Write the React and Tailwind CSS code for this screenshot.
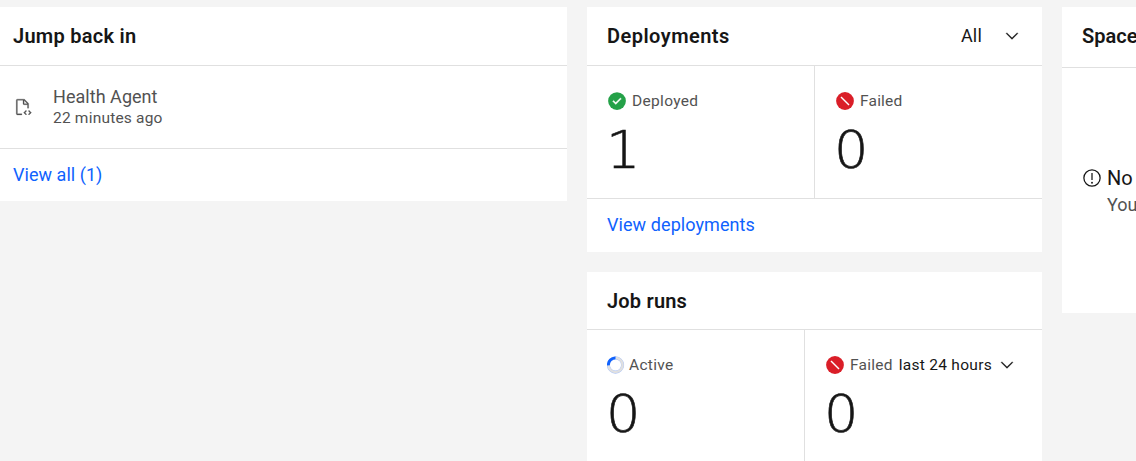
import React from "react";

function Chevron() {
  return (
    <svg className="h-[18px] w-[18px] shrink-0" viewBox="0 0 16 16" fill="#161616" stroke="#161616" strokeWidth="0.2">
      <path d="M8 11 2.7 5.7 3.4 5 8 9.6 12.6 5 13.3 5.7z" />
    </svg>
  );
}

function DocumentIcon() {
  return (
    <svg className="h-[18px] w-[18px] shrink-0" viewBox="0 0 32 32" fill="#525252" stroke="#525252" strokeWidth="0.5">
      <path d="M31 26l-4.24 4.24-1.41-1.41L28.17 26l-2.82-2.83 1.41-1.41zM17 26l4.24-4.24 1.41 1.41L19.83 26l2.82 2.83-1.41 1.41z" />
      <path d="M14 28H6V4h10v6a2 2 0 0 0 2 2h6v6h2v-8a.9.9 0 0 0-.3-.7l-7-7A.9.9 0 0 0 18 2H6a2 2 0 0 0-2 2v24a2 2 0 0 0 2 2h8zM18 4.4l5.6 5.6H18z" />
    </svg>
  );
}

function SuccessIcon() {
  return (
    <svg className="h-5 w-5 shrink-0" viewBox="0 0 32 32">
      <circle cx="16" cy="16" r="14.2" fill="#24a148" />
      <path d="M14 21.59l-5-5L10.59 15 14 18.41 21.41 11 23 12.58z" fill="#fff" stroke="#fff" strokeWidth="0.5" />
    </svg>
  );
}

function FailedIcon() {
  return (
    <svg className="h-5 w-5 shrink-0" viewBox="0 0 20 20">
      <circle cx="10" cy="10" r="8.9" fill="#da1e28" />
      <path d="M6 6l8 8" stroke="#fff" strokeWidth="1.5" />
    </svg>
  );
}

function ActiveIcon() {
  return (
    <svg className="h-[18px] w-[18px] shrink-0" viewBox="0 0 18 18" fill="none">
      <circle cx="8.5" cy="9" r="7.1" stroke="#a9c2f8" strokeWidth="3.1" />
      <circle cx="8.5" cy="9" r="7.1" stroke="#e0e0e0" strokeWidth="2.4" />
      <path d="M1.4 9.4a7.1 7.1 0 0 1 7.1-7.5" stroke="#0f62fe" strokeWidth="2.9" />
    </svg>
  );
}

function WarningIcon() {
  return (
    <svg className="mt-[2px] h-5 w-5 shrink-0" viewBox="0 0 32 32" fill="#161616">
      <path d="M16 2a14 14 0 1 0 14 14A14 14 0 0 0 16 2zm0 26a12 12 0 1 1 12-12 12 12 0 0 1-12 12z" />
      <path d="M15 8h2v11h-2zM16 22a1.5 1.5 0 1 0 1.5 1.5A1.5 1.5 0 0 0 16 22z" />
    </svg>
  );
}

function Heading({ children, className }) {
  return <h2 className={"whitespace-nowrap text-[20px] leading-6 font-semibold " + className}>{children}</h2>;
}

function BigNumber({ children }) {
  return (
    <div className="mt-[10px] -ml-[1px] w-[34px] origin-left scale-x-[1.06] font-['DejaVu_Sans',sans-serif] text-[51px] leading-[60px] font-extralight [-webkit-text-stroke:0.6px_#161616]">
      {children}
    </div>
  );
}

function Label({ children, className }) {
  return <span className={"whitespace-nowrap text-[15.5px] leading-5 text-[#525252] " + className}>{children}</span>;
}

export default function App() {
  return (
    <main className="flex h-[461px] w-full items-start gap-5 overflow-hidden bg-[#f4f4f4] pt-[7px] font-['Roboto','Noto_Sans',sans-serif] text-[#161616]">
      <section className="w-[567px] shrink-0 bg-white">
        <header className="flex h-[59px] items-center border-b border-[#e0e0e0] pl-[13px]">
          <Heading className="tracking-[0.27px]">Jump back in</Heading>
        </header>
        <div className="flex h-[83px] items-center gap-[21px] border-b border-[#e0e0e0] pl-[14px]">
          <DocumentIcon />
          <div className="flex flex-col whitespace-nowrap text-[#525252]">
            <span className="text-[18px] leading-[22px] tracking-[0.04px]">Health Agent</span>
            <span className="text-[15.5px] leading-5 tracking-[0.2px]">22 minutes ago</span>
          </div>
        </div>
        <a className="flex h-[52px] items-center pb-[2px] pl-[13px] text-[18px] tracking-[0.04px] text-[#0f62fe]">View all (1)</a>
      </section>

      <div className="flex w-[455px] shrink-0 flex-col gap-5">
        <section className="bg-white">
          <header className="flex h-[59px] items-center justify-between border-b border-[#e0e0e0] pr-[21px] pl-5">
            <Heading className="tracking-[0.47px]">Deployments</Heading>
            <button className="flex items-center gap-[21px] text-[18px]">
              <span className="pb-[2px] tracking-[0.2px]">All</span>
              <Chevron />
            </button>
          </header>
          <div className="flex h-[133px] border-b border-[#e0e0e0]">
            <div className="w-[228px] border-r border-[#e0e0e0] pt-[25px] pl-5">
              <div className="flex items-center gap-[5px]">
                <SuccessIcon />
                <Label className="tracking-[0.32px]">Deployed</Label>
              </div>
              <BigNumber>1</BigNumber>
            </div>
            <div className="flex-1 pt-[25px] pl-5">
              <div className="flex items-center gap-[5px]">
                <FailedIcon />
                <Label className="tracking-[0.2px]">Failed</Label>
              </div>
              <BigNumber>0</BigNumber>
            </div>
          </div>
          <a className="flex h-[53px] items-center pb-[2px] pl-5 text-[18px] tracking-[0.08px] text-[#0f62fe]">View deployments</a>
        </section>

        <section className="bg-white">
          <header className="flex h-[58px] items-center border-b border-[#e0e0e0] pl-5">
            <Heading className="tracking-[0.2px]">Job runs</Heading>
          </header>
          <div className="flex h-[133px]">
            <div className="w-[218px] border-r border-[#e0e0e0] pt-[25px] pl-5">
              <div className="flex h-5 items-center gap-[4px]">
                <ActiveIcon />
                <Label className="tracking-[0.3px]">Active</Label>
              </div>
              <BigNumber>0</BigNumber>
            </div>
            <div className="flex-1 pt-[25px] pl-5">
              <div className="flex h-5 items-center">
                <FailedIcon />
                <Label className="ml-[5px] tracking-[0.25px]">Failed</Label>
                <button className="ml-[6px] flex items-center gap-[6px] text-[15.5px] leading-5 whitespace-nowrap">
                  <span className="tracking-[0.28px]">last 24 hours</span>
                  <Chevron />
                </button>
              </div>
              <BigNumber>0</BigNumber>
            </div>
          </div>
        </section>
      </div>

      <section className="h-[306px] min-w-0 flex-1 overflow-hidden bg-white">
        <header className="flex h-[61px] items-center border-b border-[#e0e0e0] pb-[2px] pl-5">
          <Heading>Space</Heading>
        </header>
        <div className="flex gap-[5px] pt-[98px] pl-5">
          <WarningIcon />
          <div className="flex flex-col whitespace-nowrap">
            <span className="text-[20px] leading-6">No</span>
            <span className="mt-[3px] text-[18px] leading-6 text-[#525252]">You</span>
          </div>
        </div>
      </section>
    </main>
  );
}
